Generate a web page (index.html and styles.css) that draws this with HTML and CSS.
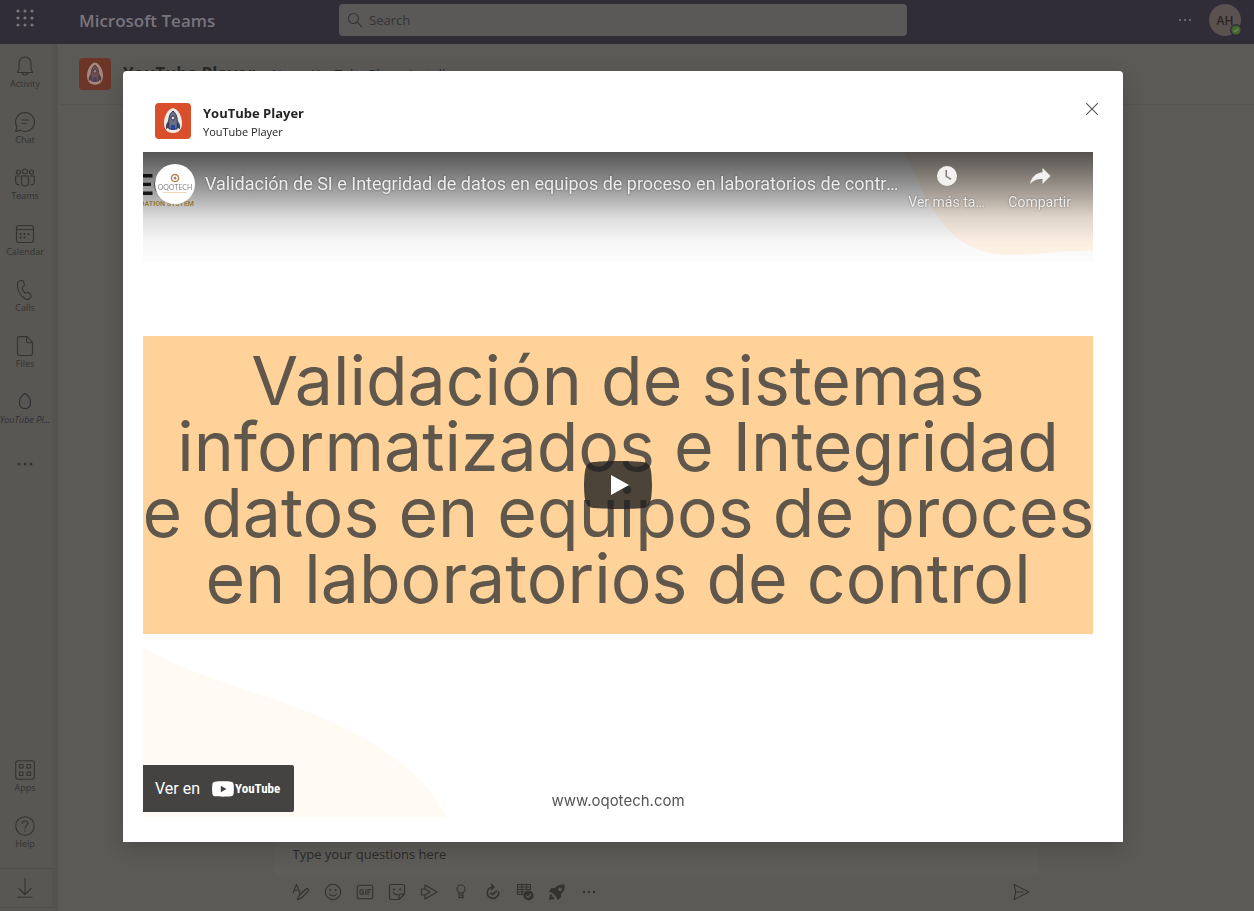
FILE: index.html
```html
<!DOCTYPE html>
<html lang="en">
<head>
<meta charset="utf-8">
<title>Microsoft Teams</title>
<link rel="stylesheet" href="styles.css">
</head>
<body>
<svg class="defs" aria-hidden="true">
  <symbol id="rocket" viewBox="0 0 36 36">
    <path class="rk-halo" d="M18 5c5 1 9 8 9 15 0 6-3 10-9 10s-9-4-9-10c0-7 4-14 9-15z"/>
    <path class="rk-fin" d="M13 18l-2 4v4l4-2zM23 18l2 4v4l-4-2z"/>
    <path class="rk-body" d="M18 8c4 3 5 8 4 18h-8c-1-10 0-15 4-18z"/>
    <circle class="rk-window" cx="18" cy="15" r="2"/>
    <path class="rk-flame" d="M16 22h4v5h-4z"/>
  </symbol>
</svg>
<div class="app">
  <header class="topbar">
    <button class="waffle" aria-label="App launcher"><svg width="18" height="18" viewBox="0 0 18 18" fill="currentColor"><circle cx="2" cy="2" r="1.6"/><circle cx="9" cy="2" r="1.6"/><circle cx="16" cy="2" r="1.6"/><circle cx="2" cy="9" r="1.6"/><circle cx="9" cy="9" r="1.6"/><circle cx="16" cy="9" r="1.6"/><circle cx="2" cy="16" r="1.6"/><circle cx="9" cy="16" r="1.6"/><circle cx="16" cy="16" r="1.6"/></svg></button>
    <span class="brand">Microsoft Teams</span>
    <label class="search"><svg class="line" width="16" height="16" viewBox="0 0 16 16"><circle cx="6.5" cy="6.5" r="5"/><path d="M10.2 10.2l4.6 4.6"/></svg><input type="search" placeholder="Search" aria-label="Search"></label>
    <div class="account">
      <button class="more" aria-label="Settings and more"><svg width="14" height="4" viewBox="0 0 14 4" fill="currentColor"><circle cx="2" cy="2" r="1.1"/><circle cx="7" cy="2" r="1.1"/><circle cx="12" cy="2" r="1.1"/></svg></button>
      <button class="me" aria-label="Profile">AH<svg class="presence" width="12" height="12" viewBox="0 0 12 12"><circle class="ring" cx="6" cy="6" r="6"/><circle class="dot" cx="6" cy="6" r="4.6"/><path d="M3.8 6.2l1.6 1.5 2.8-3"/></svg></button>
    </div>
  </header>

  <nav class="rail">
    <a class="item" href="#"><svg class="line" width="20" height="20" viewBox="0 0 20 20"><path d="M2.5 16.5h15L16 13V7.500C16 4 13.500 1 10 1S4 4 4 7.500V13zM7.500 16.500c0 1.500 1 2.500 2.500 2.500s2.500-1 2.500-2.500"/></svg>Activity</a>
    <a class="item" href="#"><svg class="line" width="20" height="20" viewBox="0 0 20 20"><path d="M10 .6a9.400 9.400 0 1 1-4.700 17.500L.7 19.400l1.200-4.700A9.400 9.400 0 0 1 10 .6zM7 8h6.500M7 11.500h4"/></svg>Chat</a>
    <a class="item" href="#"><svg class="line" width="20" height="20" viewBox="0 0 20 20"><circle cx="3.500" cy="4" r="2"/><circle cx="10" cy="3.500" r="2.500"/><circle cx="16.500" cy="4" r="2"/><path d="M6.500 8h7v6.500a3.500 3.500 0 0 1-7 0zM4.500 8H.7v5.500c0 2 1.300 3.500 3.800 3.500M15.500 8h3.800v5.500c0 2-1.300 3.500-3.800 3.500"/></svg>Teams</a>
    <a class="item" href="#"><svg class="line" width="20" height="20" viewBox="0 0 20 20"><rect x="1.500" y="1.500" width="17" height="17" rx="2.500"/><path d="M1.500 5.500h17"/><path class="dots" d="M9.500 10h.1M13.500 10h.1M5.500 13.500h.1M9.500 13.500h.1M5.500 10h.1"/></svg>Calendar</a>
    <a class="item" href="#"><svg class="line" width="20" height="20" viewBox="0 0 20 20"><path d="M4 1.300l2.300-.7c1-.3 2 .3 2.300 1.300l.7 2.200c.2.800 0 1.500-.6 2L7 7.600c.2 2.200 1.300 4.200 3.200 5.600l2-.7c.8-.2 1.600 0 2 .6l1.500 2c.5.7.4 1.700-.2 2.300l-1 1.100c-1 1-2.600 1.200-4 .5C5.400 16.300 2.500 11.300 2.300 4.600c0-1.500.600-2.800 1.700-3.300z"/></svg>Calls</a>
    <a class="item" href="#"><svg class="line" width="20" height="20" viewBox="0 0 20 20"><path d="M4.500.6H12l5.500 5.600V17.500a2 2 0 0 1-2 2h-11a2 2 0 0 1-2-2v-15c0-1 1-1.900 2-1.900zM11.500.8v4.300c0 1 .7 1.700 1.600 1.700h4.200"/></svg>Files</a>
    <a class="item current" href="#"><svg class="line" width="20" height="20" viewBox="0 0 20 20"><path d="M10 1.500c3.500 2 5.500 6 5.500 9.500 0 3.500-2 5.500-5.500 5.500S4.500 14.500 4.500 11c0-3.500 2-7.500 5.500-9.500z"/></svg>YouTube Pl...</a>
    <button class="item dots-item" aria-label="More apps"><svg width="18" height="4" viewBox="0 0 18 4" fill="currentColor"><circle cx="3" cy="2" r="1.500"/><circle cx="9" cy="2" r="1.500"/><circle cx="15" cy="2" r="1.500"/></svg></button>
    <div class="rail-end">
      <a class="item" href="#"><svg class="line" width="20" height="20" viewBox="0 0 20 20"><rect x=".7" y=".7" width="18.600" height="18.600" rx="2.500"/><rect x="4.500" y="4.500" width="3.500" height="3.500"/><rect x="12" y="4.500" width="3.500" height="3.500"/><rect x="4.500" y="12" width="3.500" height="3.500"/><rect x="12" y="12" width="3.500" height="3.500"/></svg>Apps</a>
      <a class="item" href="#"><svg class="line" width="20" height="20" viewBox="0 0 20 20"><circle cx="10" cy="10" r="9.300"/><path d="M7.300 7.500C7.300 5.800 8.500 5 10 5s2.700 1 2.700 2.500c0 2.200-2.700 2.300-2.700 4.700M10 14.200v1"/></svg>Help</a>
      <button class="download" aria-label="Download the desktop app"><svg class="line" width="16" height="20" viewBox="0 0 16 20"><path d="M8 0v16M2 10.500l6 6 6-6M1 19.300h14"/></svg></button>
    </div>
  </nav>

  <main class="main">
    <div class="chat-head">
      <svg class="app-icon" width="32" height="32"><use href="#rocket"/></svg>
      <h1>YouTube Player</h1>
      <span>Name YouTube Player installer</span>
    </div>
    <form class="composer">
      <input class="question" type="text" placeholder="Type your questions here" aria-label="Type your questions here">
      <div class="tools">
        <button type="button" aria-label="Format"><svg class="line" width="18" height="18" viewBox="0 0 18 18"><path d="M1 10L4.500 1.500 8 10M2.200 7.300h4.600M5.500 16.500l2-4.500 6.500-6c1.500-1 3.500.8 2.300 2.300l-6.300 6.200-3.500 2z"/></svg></button>
        <button type="button" aria-label="Emoji"><svg class="line" width="18" height="18" viewBox="0 0 18 18"><circle cx="9" cy="9" r="7.700"/><path d="M5.500 11c1.700 2.700 5.300 2.700 7 0"/><path class="dots" d="M6.300 7h.1M11.600 7h.1"/></svg></button>
        <button type="button" aria-label="GIF"><svg class="line" width="18" height="18" viewBox="0 0 18 18"><rect x="1.300" y="2.300" width="15.400" height="13.400" rx="2"/><path d="M7.300 7.300C5.500 6 3.700 7 3.700 9s1.800 3 3.600 2V9H6M9.800 6.500v5M12 11.500v-5h2.800M12 9h2.300"/></svg></button>
        <button type="button" aria-label="Sticker"><svg class="line" width="18" height="18" viewBox="0 0 18 18"><path d="M3.500 1.500h11a2 2 0 0 1 2 2V11L11 16.500H3.500a2 2 0 0 1-2-2v-11c0-1 1-2 2-2zM11 16.500V13c0-1 1-2 2-2h3.500M5.500 9.500c.8 1.700 2.500 2.500 4.500 2"/><path class="dots" d="M6 6.500h.1M12 6.500h.1"/></svg></button>
        <button type="button" aria-label="Stream"><svg class="line" width="18" height="18" viewBox="0 0 18 18"><path d="M5 2l12 7-12 7v-4H1.500V6H5zM5 6l5 3-5 3"/></svg></button>
        <button type="button" aria-label="Praise"><svg class="line" width="18" height="18" viewBox="0 0 18 18"><circle cx="9" cy="6" r="4"/><path d="M7 9.500V15l2-.7 2 .7V9.500M7 12h4"/></svg></button>
        <button type="button" aria-label="Updates"><svg class="line bold" width="18" height="18" viewBox="0 0 18 18"><path d="M9 4a5.700 5.700 0 1 0 5.600 5M7.500 1.500L10 4 7.500 6.500M6.500 10l2 1.700 4-3.700"/></svg></button>
        <button type="button" aria-label="Approvals"><svg width="18" height="18" viewBox="0 0 18 18"><path class="line" d="M1.500 1.500h13v5h-13zM1.500 6.500v5h7M6 1.500v10M10.500 1.500v5M1.500 4h13M1.500 9h7"/><circle cx="12.500" cy="12.500" r="5" fill="currentColor"/><path class="tick" d="M10 12.500l2 2 3-3.500"/></svg></button>
        <button type="button" aria-label="YouTube Player"><svg width="18" height="18" viewBox="0 0 18 18" fill="currentColor"><path fill-rule="evenodd" d="M16.500 1.500c.5 4-.7 7.500-3.500 9.500v3.500L9.500 17 8 13.500 4.500 10 1 8.500 3.500 5H7c2-2.800 5.500-4 9.500-3.500zM12 4.500a1.800 1.800 0 1 0 .1 0z"/><path d="M2 11l2.500 1-1 2 2-.5L6.500 16 1 17z"/></svg></button>
        <button type="button" aria-label="More options"><svg width="18" height="18" viewBox="0 0 18 18" fill="currentColor"><circle cx="4" cy="9" r="1.200"/><circle cx="9" cy="9" r="1.200"/><circle cx="14" cy="9" r="1.200"/></svg></button>
        <button type="submit" class="send" aria-label="Send"><svg class="line" width="18" height="18" viewBox="0 0 18 18"><path d="M2 1.500L17 9 2 16.500 3.700 9zM4 9h7"/></svg></button>
      </div>
    </form>
  </main>
</div>

<div class="overlay">
  <section class="dialog" role="dialog" aria-label="YouTube Player">
    <header class="dialog-head">
      <svg class="app-icon" width="36" height="36"><use href="#rocket"/></svg>
      <div class="dialog-title"><h2>YouTube Player</h2><p>YouTube Player</p></div>
      <button class="close" aria-label="Close"><svg class="line" width="12" height="12" viewBox="0 0 12 12"><path d="M0 0l12 12M12 0L0 12"/></svg></button>
    </header>
    <div class="player">
      <div class="slide">
        <div class="slide-top">
          <div class="slide-logo"><b>ECH</b><small>VALIDATION SYSTEM</small></div>
          <svg class="blob" width="190" height="105" viewBox="0 0 190 105"><path d="M0 0C12 18 18 40 28 55c22 35 45 48 82 48 30 0 45-5 80-4V0z"/></svg>
        </div>
        <div class="banner">
          <span>Validación de sistemas</span>
          <span>informatizados e Integridad</span>
          <span>de datos en equipos de proceso</span>
          <span>en laboratorios de control</span>
        </div>
        <div class="slide-end">
          <svg class="hill" width="304" height="170" viewBox="0 0 304 170"><path d="M0 0C30 18 65 30 98 41c82 27 170 60 206 129H0z"/></svg>
          <span class="site">www.oqotech.com</span>
        </div>
      </div>
      <div class="chrome">
        <a class="channel" href="#" aria-label="OQOTECH"><svg width="12" height="10" viewBox="0 0 12 10"><circle class="c1" cx="6" cy="5" r="3.600"/><circle class="c2" cx="6" cy="5" r="1.500"/></svg><span>OQOTECH</span><i></i></a>
        <a class="video-title" href="#">Validación de SI e Integridad de datos en equipos de proceso en laboratorios de control de calidad</a>
        <button class="later"><svg width="28" height="28" viewBox="0 0 28 28"><path fill-rule="evenodd" d="M14 4a10 10 0 1 0 0 20 10 10 0 0 0 0-20zm-1.500 4H14v6l4.500 2.700-.8 1.300-5.200-3.200z"/></svg><span>Ver más tarde</span></button>
        <button class="share"><svg width="28" height="28" viewBox="0 0 28 28"><path d="M16.500 6l8 8-8 8v-5c-5.500 0-9 1.300-12.500 5 1.500-6.500 5.500-11 12.500-11.700z"/></svg><span>Compartir</span></button>
      </div>
      <button class="play" aria-label="Play"><svg width="68" height="48" viewBox="0 0 68 48"><path class="pill" d="M66.500 7.700c-.8-2.900-2.500-5.400-5.400-6.200C55.800.1 34 0 34 0S12.200.1 6.900 1.600C4 2.300 2.300 4.800 1.500 7.700.1 13 0 24 0 24s.1 11 1.500 16.300c.8 2.900 2.500 5.400 5.400 6.200C12.200 47.900 34 48 34 48s21.800-.1 27.100-1.600c2.900-.7 4.600-3.200 5.400-6.100C67.900 35 68 24 68 24s-.1-11-1.500-16.300z"/><path class="tri" d="M45 24L27 14v20"/></svg></button>
      <a class="watch" href="#"><span>Ver en</span><svg width="22" height="16" viewBox="0 0 22 16"><path fill-rule="evenodd" d="M3 .7C7 .2 15 .2 19 .7c1.500.2 2.400 1 2.600 2.500.4 3 .4 6.600 0 9.600-.2 1.500-1.100 2.300-2.600 2.500-4 .5-12 .5-16 0C1.500 15.100.6 14.300.4 12.800 0 9.800 0 6.200.4 3.200.6 1.700 1.500.9 3 .7zM8.800 4.700v6.600l5.700-3.300z"/></svg><b>YouTube</b></a>
    </div>
  </section>
</div>
</body>
</html>
```
FILE: styles.css
```css
* { box-sizing: border-box; }
body {
  margin: 0;
  font-family: "Open Sans", "Noto Sans", sans-serif;
  color: #2b2a28;
  background: #5b5a57;
}
button, input { font: inherit; color: inherit; border: 0; background: none; padding: 0; }
a { color: inherit; text-decoration: none; }
h1, h2, p { margin: 0; }
.defs { position: absolute; width: 0; height: 0; }
.line { fill: none; stroke: currentColor; stroke-width: 1.1; stroke-linejoin: round; stroke-linecap: round; }
.bold { stroke-width: 1.6; }
.dots { stroke-width: 2; }

.app {
  display: grid;
  grid-template: 44px 1fr / 59px 1fr;
  height: 100vh;
}
.topbar {
  grid-column: 1 / -1;
  display: grid;
  grid-template-columns: 50px 289px minmax(0, 568px) 1fr;
  align-items: center;
  height: 44px;
  padding-bottom: 4px;
  background: #302d39;
  color: #77757c;
}
.waffle { display: flex; justify-content: center; padding-bottom: 4px; }
.brand { padding-left: 29px; font-size: 17px; font-weight: 600; }
.search {
  display: flex;
  align-items: center;
  gap: 6px;
  height: 32px;
  padding: 0 8px;
  border-radius: 4px;
  background: #5a5957;
  color: #353437;
  font-size: 13px;
}
.search input { flex: 1; min-width: 0; outline: 0; appearance: none; }
input::placeholder { color: inherit; opacity: 1; }
.account { display: flex; justify-content: flex-end; align-items: center; gap: 17px; padding-right: 13px; }
.more { display: flex; }
.me {
  position: relative;
  width: 32px;
  height: 32px;
  border-radius: 50%;
  background: #5b5250;
  color: #2b2423;
  font-size: 12px;
  font-weight: 600;
}
.presence { position: absolute; right: -1px; bottom: 0; }
.presence .ring { fill: #302d39; }
.presence .dot { fill: #41672b; }
.presence path { fill: none; stroke: #75866a; stroke-width: 1.2; }

.rail {
  display: flex;
  flex-direction: column;
  min-height: 0;
  overflow: hidden;
  background: linear-gradient(to right, #585754 50px, #52514e 58px, #5d5c59 58px);
  color: #343331;
  font-size: 9px;
}
.item {
  display: flex;
  flex-direction: column;
  align-items: center;
  gap: 1px;
  width: 50px;
  height: 56px;
  padding-top: 12px;
  line-height: 14px;
  white-space: nowrap;
}
.item svg { flex: none; }
.current { color: #302e35; font-style: italic; }
.dots-item { justify-content: center; padding: 0; }
.rail-end { margin-top: auto; }
.download {
  display: flex;
  align-items: center;
  justify-content: center;
  width: 54px;
  height: 40px;
  margin: 8px 0 3px;
  padding-right: 4px;
  border: 1px solid #504f4c;
  border-left: 0;
}

.main { display: flex; flex-direction: column; min-width: 0; }
.chat-head {
  display: flex;
  align-items: center;
  gap: 12px;
  height: 61px;
  padding: 0 20px;
  border-bottom: 1px solid #555451;
  white-space: nowrap;
}
.chat-head h1 { flex: none; width: 137px; font-size: 17px; line-height: 24px; font-weight: 700; }
.chat-head span { font-size: 13px; }
.app-icon { flex: none; border-radius: 4px; background: #d94f2b; }
.rk-halo { fill: #eee9e8; }
.rk-body { fill: #667087; stroke: #30333d; stroke-width: 1; }
.rk-fin { fill: #35446f; }
.rk-window { fill: #d7dce4; stroke: #30333d; }
.rk-flame { fill: #2843a2; }
.chat-head .app-icon { background: #6b3628; }
.chat-head .app-icon use { opacity: .45; }

.composer { width: min(764px, 100%); margin: auto auto 10px; }
.question {
  display: block;
  width: 100%;
  height: 44px;
  padding: 0 18px;
  border-radius: 3px;
  background: #5d5c59;
  font-size: 13px;
}
.tools { display: flex; align-items: center; gap: 14px; padding: 7px 9px 0 17px; color: #333230; }
.tools button { display: flex; }
.tools .send { margin-left: auto; }
.tick { fill: none; stroke: #5b5a57; stroke-width: 1.3; }

.overlay {
  position: fixed;
  inset: 0;
  display: flex;
  align-items: center;
  justify-content: center;
  padding: 2px 8px 0 0;
}
.dialog {
  width: min(1000px, 100%);
  padding: 32px 30px 24px 20px;
  border-radius: 4px 4px 0 0;
  background: #fff;
  box-shadow: 0 6px 20px rgba(0, 0, 0, .18);
}
.dialog-head { display: flex; gap: 12px; margin-bottom: 11px; padding-left: 12px; }
.dialog-title { flex: 1; color: #252423; }
.dialog-title h2 { font-size: 13px; line-height: 20px; font-weight: 700; }
.dialog-title p { font-size: 11px; line-height: 18px; }
.close { display: flex; align-self: flex-start; color: #555; margin-right: -5px; }

.player { position: relative; overflow: hidden; font-family: Roboto, sans-serif; }
.slide { display: grid; grid-template-rows: 184px auto 184px; background: #fff; }
.slide-top { display: flex; justify-content: space-between; height: 110px; background: #fcfcfc; }
.slide-logo {
  display: flex;
  flex-direction: column;
  align-items: flex-end;
  width: 51px;
  padding-top: 18px;
  overflow: hidden;
  color: #222;
}
.slide-logo b { font-size: 30px; line-height: 30px; }
.slide-logo small { color: #c9a04e; font-size: 7px; line-height: 8px; font-weight: 700; white-space: nowrap; }
.blob path { fill: #fff3e6; }
.banner {
  display: flex;
  flex-direction: column;
  align-items: center;
  min-width: 0;
  padding: 11px 0 23px;
  overflow: hidden;
  background: #ffd299;
  color: #5f564c;
  font-family: Inter, "Open Sans", sans-serif;
  font-size: 68px;
  line-height: 66px;
}
.banner span { white-space: nowrap; }
.slide-end { display: flex; align-items: flex-end; justify-content: center; position: relative; padding-bottom: 7px; }
.hill { position: absolute; left: 0; bottom: 1px; }
.hill path { fill: #fffaf4; }
.site { color: #555; font-family: Inter, sans-serif; font-size: 15px; line-height: 20px; }

.chrome {
  position: absolute;
  inset: 0 0 auto;
  display: flex;
  align-items: flex-start;
  height: 110px;
  padding: 12px 22px 0 12px;
  background: linear-gradient(rgba(0, 0, 0, .67), rgba(0, 0, 0, .5) 20%, rgba(0, 0, 0, .32) 40%, rgba(0, 0, 0, .12) 60%, rgba(0, 0, 0, .02) 82%, transparent);
  color: #eee;
}
.channel {
  flex: none;
  display: flex;
  flex-direction: column;
  align-items: center;
  width: 40px;
  height: 40px;
  padding-top: 9px;
  border-radius: 50%;
  background: #fff;
  color: #888;
  font-family: Lato, sans-serif;
  font-size: 7px;
  line-height: 9px;
}
.channel .c1 { fill: none; stroke: #b9864e; stroke-width: 1.500; }
.channel .c2 { fill: #8d8d8d; }
.channel i { width: 24px; height: 1px; background: #efd9bd; }
.video-title {
  flex: 1;
  min-width: 0;
  margin: 0 10px;
  overflow: hidden;
  font-size: 18px;
  line-height: 40px;
  text-overflow: ellipsis;
  white-space: nowrap;
  text-shadow: 0 0 2px rgba(0, 0, 0, .5);
}
.later, .share {
  display: flex;
  flex-direction: column;
  align-items: center;
  gap: 2px;
  margin-top: -2px;
  font-size: 14px;
  line-height: 20px;
  text-shadow: 0 0 2px rgba(0, 0, 0, .5);
}
.later svg, .share svg { fill: #f3f1ef; }
.later { width: 78px; margin-right: 22px; }
.later span { width: 100%; overflow: hidden; text-overflow: ellipsis; white-space: nowrap; }
.play { position: absolute; inset: 0; margin: auto; width: 68px; height: 48px; }
.play svg { display: block; }
.pill { fill: #212121; fill-opacity: .8; }
.tri { fill: #fff; }
.watch {
  position: absolute;
  left: 0;
  bottom: 6px;
  display: flex;
  align-items: center;
  height: 47px;
  padding: 0 14px 0 12px;
  border-radius: 0 2px 2px 0;
  background: #454341;
  color: #fff;
  font-size: 16px;
}
.watch svg { margin: 0 1px 0 12px; fill: #fff; }
.watch b { font-family: "Liberation Sans Narrow", "Roboto Condensed", Roboto, sans-serif; font-size: 13px; }
```
